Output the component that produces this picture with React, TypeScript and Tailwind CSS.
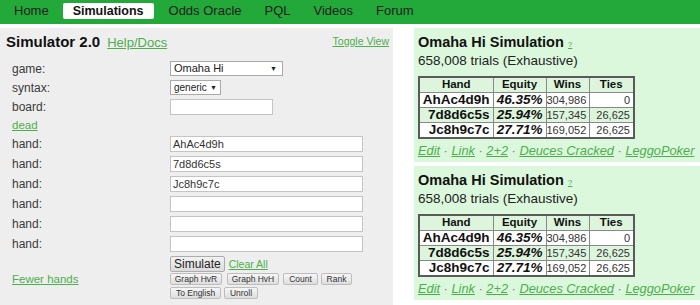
import React from "react";

const G = "text-[#4cae4c]";

function Row({ label, h, children }: { label: React.ReactNode; h: string; children?: React.ReactNode }) {
  return (
    <div className={`flex items-center pl-[12px] ${h}`}>
      <div className="w-[158px] text-[12px] leading-[14px] text-[#3a3a3a]">{label}</div>
      {children}
    </div>
  );
}

function TextBox({ w, value }: { w: string; value?: string }) {
  return (
    <div className={`${w} h-[16px] bg-white border border-[#c4c4c4] text-[11px] leading-[14px] text-[#333] pl-[2px]`}>
      {value}
    </div>
  );
}

function SmallBtn({ w, children }: { w: string; children: React.ReactNode }) {
  return (
    <div className={`${w} h-[12px] flex items-center justify-center rounded-[2px] border border-[#bdbdbd] bg-gradient-to-b from-[#f6f6f6] to-[#dedede] text-[8.5px] leading-[10px] text-[#333]`}>
      {children}
    </div>
  );
}

function SimSection() {
  const rows = [
    { hand: "AhAc4d9h", eq: "46.35%", wins: "304,986", ties: "0", bg: "bg-white" },
    { hand: "7d8d6c5s", eq: "25.94%", wins: "157,345", ties: "26,625", bg: "bg-[#ddf5dd]" },
    { hand: "Jc8h9c7c", eq: "27.71%", wins: "169,052", ties: "26,625", bg: "bg-white" },
  ];
  return (
    <div className="h-[134px] bg-[#dcf8dc] pl-[4px] pt-[6px]">
      <div className="text-[14.5px] font-bold leading-[16px] text-[#111]">
        Omaha Hi Simulation <span className={`text-[8px] font-normal underline ${G}`}>?</span>
      </div>
      <div className="text-[13.5px] leading-[16px] text-[#222]">658,008 trials (Exhaustive)</div>
      <table className="mt-[7px] w-[215px] table-fixed border-collapse border-2 border-[#5a5a5a] text-[#111]">
        <colgroup>
          <col className="w-[74px]" />
          <col className="w-[53px]" />
          <col className="w-[43px]" />
          <col className="w-[45px]" />
        </colgroup>
        <thead>
          <tr className="h-[15px] bg-[#ddf5dd]">
            <th className="border border-[#888] text-[11.5px] leading-[13px] font-bold p-0">Hand</th>
            <th className="border border-[#888] text-[11.5px] leading-[13px] font-bold p-0">Equity</th>
            <th className="border border-[#888] text-[11.5px] leading-[13px] font-bold p-0">Wins</th>
            <th className="border border-[#888] text-[11.5px] leading-[13px] font-bold p-0">Ties</th>
          </tr>
        </thead>
        <tbody>
          {rows.map((r) => (
            <tr key={r.hand} className={`h-[15px] ${r.bg}`}>
              <td className="border border-[#888] text-right pr-[3px] text-[13.5px] leading-[14px] font-bold p-0">{r.hand}</td>
              <td className="border border-[#888] text-right pr-[3px] text-[13.5px] leading-[14px] font-bold italic p-0">{r.eq}</td>
              <td className="border border-[#888] text-right pr-[3px] text-[11px] leading-[14px] text-[#333] p-0">{r.wins}</td>
              <td className="border border-[#888] text-right pr-[3px] text-[11px] leading-[14px] text-[#333] p-0">{r.ties}</td>
            </tr>
          ))}
        </tbody>
      </table>
      <div className="mt-[4px] text-[12.8px] leading-[16px] italic">
        <span className={`underline ${G}`}>Edit</span>
        <span className="text-[#777]"> · </span>
        <span className={`underline ${G}`}>Link</span>
        <span className="text-[#777]"> · </span>
        <span className={`underline ${G}`}>2+2</span>
        <span className="text-[#777]"> · </span>
        <span className={`underline ${G}`}>Deuces Cracked</span>
        <span className="text-[#777]"> · </span>
        <span className={`underline ${G}`}>LeggoPoker</span>
      </div>
    </div>
  );
}

export default function App() {
  return (
    <div className="w-[700px] h-[305px] overflow-hidden bg-white font-['Liberation_Sans',Arial,sans-serif]">
      {/* Nav */}
      <div className="h-[24px] bg-[#23a83a] flex items-start pt-[3px] text-[13px] text-[#222]">
        <span className="ml-[14px] h-[16px] leading-[16px]">Home</span>
        <span className="ml-[14px] h-[16px] leading-[16px] px-[10px] bg-white rounded-[2px] font-bold text-[12.5px] text-[#111]">Simulations</span>
        <span className="ml-[15px] h-[16px] leading-[16px]">Odds Oracle</span>
        <span className="ml-[23px] h-[16px] leading-[16px]">PQL</span>
        <span className="ml-[23px] h-[16px] leading-[16px]">Videos</span>
        <span className="ml-[23px] h-[16px] leading-[16px]">Forum</span>
      </div>

      <div className="flex mt-[4px]">
        {/* Left panel */}
        <div className="w-[393px] h-[277px] bg-[#eeeeee]">
          <div className="h-[31px] flex items-baseline pl-[6px] pt-[5px]">
            <span className="text-[15px] font-bold leading-[18px] text-[#111]">Simulator 2.0</span>
            <span className={`ml-[7px] text-[13px] leading-[18px] underline ${G}`}>Help/Docs</span>
            <span className={`ml-auto mr-[4px] self-start mt-[1px] text-[10.5px] leading-[14px] underline ${G}`}>Toggle View</span>
          </div>

          <Row label="game:" h="h-[19px]">
            <div className="w-[113px] h-[15px] bg-white border border-[#a9a9a9] flex items-center justify-between pl-[3px] pr-[5px] text-[11px] leading-[13px] text-[#222]">
              <span>Omaha Hi</span>
              <span className="text-[7px]">▼</span>
            </div>
          </Row>
          <Row label="syntax:" h="h-[19px]">
            <div className="w-[51px] h-[15px] bg-white border border-[#a9a9a9] flex items-center justify-between pl-[3px] pr-[3px] text-[10px] leading-[13px] text-[#222]">
              <span>generic</span>
              <span className="text-[7px]">▼</span>
            </div>
          </Row>
          <Row label="board:" h="h-[19px]">
            <TextBox w="w-[103px]" />
          </Row>
          <div className="h-[18px] flex items-center pl-[12px]">
            <span className={`text-[11.5px] leading-[14px] underline ${G}`}>dead</span>
          </div>
          <Row label="hand:" h="h-[20px]"><TextBox w="w-[193px]" value="AhAc4d9h" /></Row>
          <Row label="hand:" h="h-[20px]"><TextBox w="w-[193px]" value="7d8d6c5s" /></Row>
          <Row label="hand:" h="h-[20px]"><TextBox w="w-[193px]" value="Jc8h9c7c" /></Row>
          <Row label="hand:" h="h-[20px]"><TextBox w="w-[193px]" /></Row>
          <Row label="hand:" h="h-[20px]"><TextBox w="w-[193px]" /></Row>
          <Row label="hand:" h="h-[20px]"><TextBox w="w-[193px]" /></Row>

          <div className="flex items-center pl-[12px] pt-[2px]">
            <div className="w-[158px]">
              <span className={`text-[11.5px] leading-[14px] underline ${G}`}>Fewer hands</span>
            </div>
            <div className="flex flex-col">
              <div className="flex items-center">
                <div className="h-[16px] px-[3px] flex items-center rounded-[2px] border border-[#acacac] bg-gradient-to-b from-[#f2f2f2] to-[#dcdcdc] text-[12px] leading-[14px] text-[#222]">
                  Simulate
                </div>
                <span className={`ml-[4px] text-[10.5px] leading-[14px] underline ${G}`}>Clear All</span>
              </div>
              <div className="flex mt-[1px]">
                <SmallBtn w="w-[52px]">Graph HvR</SmallBtn>
                <div className="ml-[5px]"><SmallBtn w="w-[52px]">Graph HvH</SmallBtn></div>
                <div className="ml-[4px]"><SmallBtn w="w-[35px]">Count</SmallBtn></div>
                <div className="ml-[3px]"><SmallBtn w="w-[31px]">Rank</SmallBtn></div>
              </div>
              <div className="flex mt-[2px]">
                <SmallBtn w="w-[51px]">To English</SmallBtn>
                <div className="ml-[3px]"><SmallBtn w="w-[34px]">Unroll</SmallBtn></div>
              </div>
            </div>
          </div>
        </div>

        {/* Right panel */}
        <div className="w-[286px] ml-[21px] flex flex-col gap-[4px]">
          <SimSection />
          <SimSection />
        </div>
      </div>
    </div>
  );
}
